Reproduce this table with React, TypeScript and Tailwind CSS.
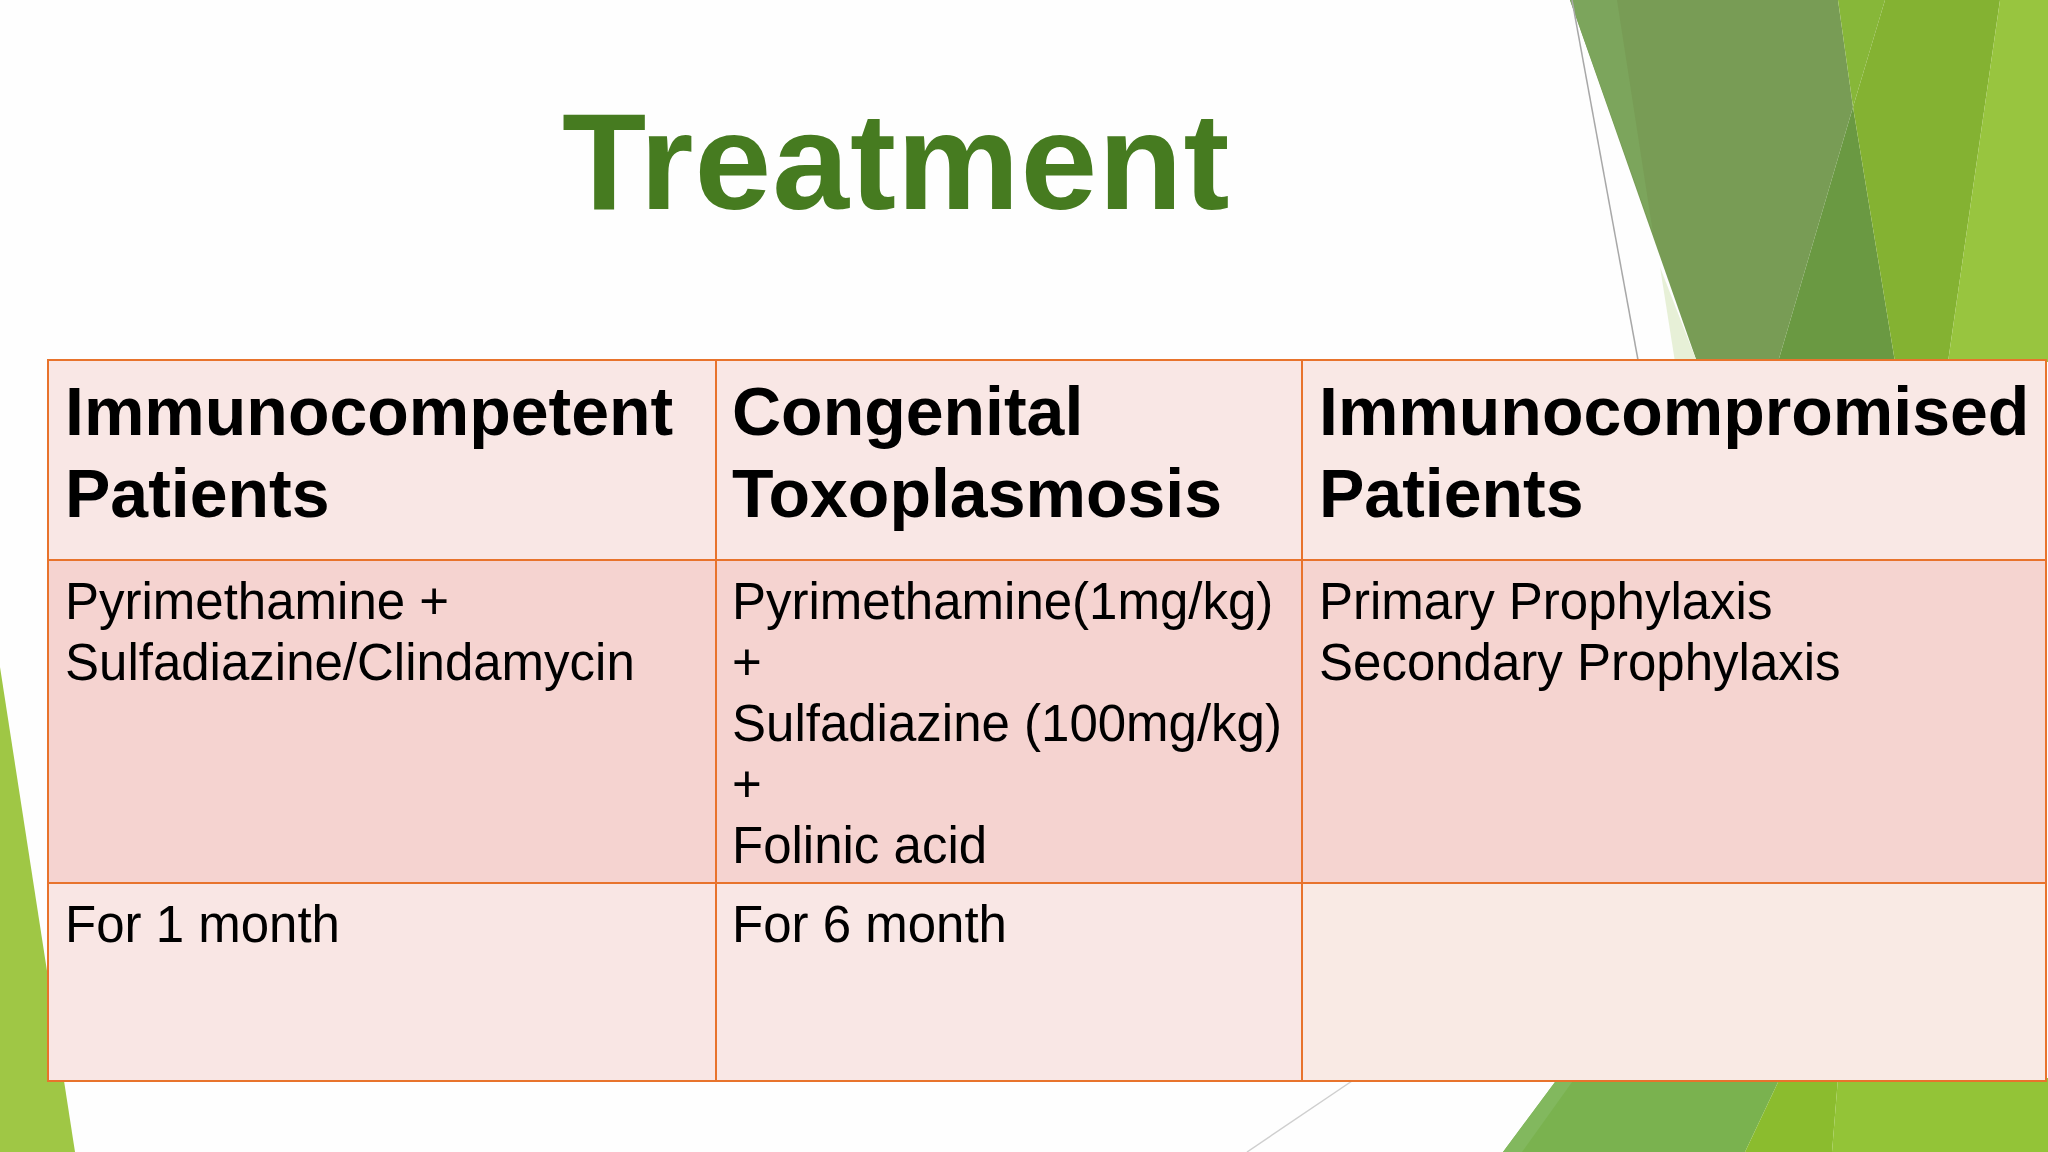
import React from "react";

const font = { fontFamily: '"Liberation Sans", Arial, sans-serif' };

function Decor() {
  return (
    <svg
      className="absolute inset-0 pointer-events-none"
      width="2048"
      height="1152"
      viewBox="0 0 2048 1152"
    >
      {/* top right facets */}
      <polygon points="1570,0 1838,0 1853,107 1778,362 1697,362" fill="#789C55" />
      <polygon points="1570,0 1617,0 1653,233" fill="#7CA55C" />
      <polygon points="1660,267 1675,362 1697,362" fill="#E7F0D7" />
      <polygon points="1838,0 1885,0 1853,107" fill="#87B739" />
      <polygon points="1853,107 1895,362 1778,362" fill="#6A9942" />
      <polygon points="1885,0 2000,0 1948,362 1895,362 1853,107" fill="#84B232" />
      <polygon points="2000,0 2048,0 2048,362 1948,362" fill="#98C53F" />
      <line x1="1572" y1="0" x2="1638" y2="360" stroke="#A8A8A8" strokeWidth="1.5" />
      {/* left facet */}
      <polygon points="0,667 75,1152 0,1152" fill="#9FC745" />
      {/* bottom right facets */}
      <polygon points="1558,1078 1780,1078 1745,1152 1503,1152" fill="#7AB24F" />
      <polygon points="1558,1078 1575,1078 1522,1152 1503,1152" fill="#82B85E" />
      <polygon points="1780,1078 1838,1078 1832,1152 1745,1152" fill="#8BBC2E" />
      <polygon points="1838,1078 2048,1078 2048,1152 1832,1152" fill="#93C437" />
      <line x1="1352" y1="1081" x2="1247" y2="1152" stroke="#CFCFCF" strokeWidth="1.5" />
    </svg>
  );
}

export default function App() {
  const head = "text-[68px] leading-[82px] font-bold text-black whitespace-nowrap";
  const body = "text-[51px] leading-[61px] text-black whitespace-nowrap";
  return (
    <div className="relative w-[2048px] h-[1152px] overflow-hidden bg-[#FEFEFE]" style={font}>
      <Decor />
      <div className="relative flex flex-col">
        <div className="h-[359px] pt-[92px] pl-[562px]">
          <h1 className="text-[138px] leading-none font-bold text-[#467B20] tracking-[1px]">
            Treatment
          </h1>
        </div>
        <div className="ml-[47px] w-[2000px] grid grid-cols-[666px_584px_742px] grid-rows-[198px_321px_196px] gap-[2px] p-[2px] bg-[#E8732C]">
          <div className={`bg-[#F9E7E5] pl-[16px] pt-[9px] ${head}`}>
            Immunocompetent
            <br />
            Patients
          </div>
          <div className={`bg-[#F9E7E5] pl-[15px] pt-[9px] ${head}`}>
            Congenital
            <br />
            Toxoplasmosis
          </div>
          <div className={`bg-[#F9E8E5] pl-[16px] pt-[9px] ${head}`}>
            Immunocompromised
            <br />
            Patients
          </div>

          <div className={`bg-[#F5D3D0] pl-[16px] pt-[10px] ${body}`}>
            Pyrimethamine +
            <br />
            Sulfadiazine/Clindamycin
          </div>
          <div className={`bg-[#F5D3D0] pl-[15px] pt-[10px] ${body}`}>
            Pyrimethamine(1mg/kg)
            <br />+
            <br />
            Sulfadiazine (100mg/kg)
            <br />+
            <br />
            Folinic acid
          </div>
          <div className={`bg-[#F5D4D0] pl-[16px] pt-[10px] ${body}`}>
            Primary Prophylaxis
            <br />
            Secondary Prophylaxis
          </div>

          <div className={`bg-[#F9E6E4] pl-[16px] pt-[10px] ${body}`}>For 1 month</div>
          <div className={`bg-[#F9E7E5] pl-[15px] pt-[10px] ${body}`}>For 6 month</div>
          <div className={`bg-[#F9EAE4] pl-[16px] pt-[10px] ${body}`}></div>
        </div>
      </div>
    </div>
  );
}
